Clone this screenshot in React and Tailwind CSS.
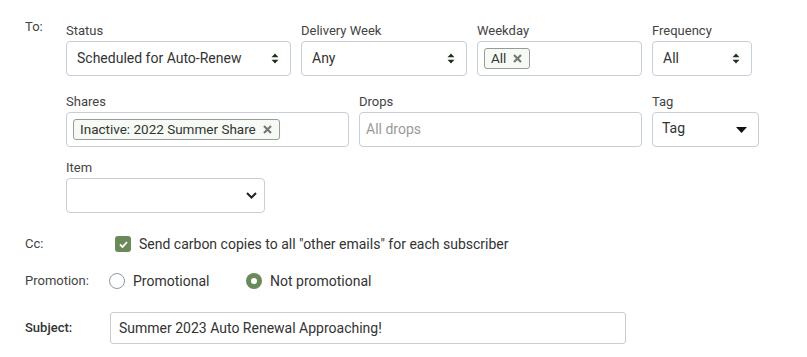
import React from 'react';

const font = { fontFamily: 'Roboto, "Noto Sans", sans-serif' };

const UpDown = () => (
    <svg width="8" height="11" viewBox="0 0 8 11" className="text-[#1f2f1f]">
        <path d="M4 0.5 L7.5 4.3 H0.5 Z" fill="currentColor" />
        <path d="M4 10.5 L7.5 6.7 H0.5 Z" fill="currentColor" />
    </svg>
);

const Caret = () => (
    <svg width="11" height="6" viewBox="0 0 11 6">
        <path d="M0 0 H11 L5.5 6 Z" fill="#111" />
    </svg>
);

const Chevron = () => (
    <svg width="11" height="7" viewBox="0 0 11 7">
        <path d="M1 1 L5.5 5.5 L10 1" fill="none" stroke="#222" strokeWidth="2" />
    </svg>
);

const X = () => (
    <svg width="9" height="9" viewBox="0 0 9 9">
        <path d="M1 1 L8 8 M8 1 L1 8" stroke="#777" strokeWidth="2.2" />
    </svg>
);

const Field = ({ label, width, children }) => (
    <div className="flex flex-col" style={{ width }}>
        <span className="text-[13px] leading-[16px] text-[#444] mb-[2px]">{label}</span>
        {children}
    </div>
);

const Box = ({ children, className = '' }) => (
    <div className={`h-[35px] border border-[#c7ced8] rounded-[4px] bg-white flex items-center ${className}`}>
        {children}
    </div>
);

const Chip = ({ text }) => (
    <span className="inline-flex items-center h-[21px] pl-[6px] pr-[7px] border border-[#9a9a9a] rounded-[3px] bg-[#f6faf4] text-[13.5px] text-[#333] gap-[7px]">
        {text}
        <X />
    </span>
);

export default function App() {
    return (
        <div className="w-[807px] h-[357px] bg-white text-[#333] pl-[25px] pt-[17px]" style={font}>
            {/* To: */}
            <div className="flex">
                <div className="w-[41px] text-[13px] text-[#444]">To:</div>
                <div className="flex flex-col pt-[6px]">
                    <div className="flex gap-[10px]">
                        <Field label="Status" width={225}>
                            <Box className="justify-between pl-[10px] pr-[11px]">
                                <span className="text-[14px]">Scheduled for Auto-Renew</span>
                                <UpDown />
                            </Box>
                        </Field>
                        <Field label="Delivery Week" width={166}>
                            <Box className="justify-between pl-[10px] pr-[11px]">
                                <span className="text-[14px]">Any</span>
                                <UpDown />
                            </Box>
                        </Field>
                        <Field label="Weekday" width={165}>
                            <Box className="pl-[6px]">
                                <Chip text="All" />
                            </Box>
                        </Field>
                        <Field label="Frequency" width={100}>
                            <Box className="justify-between pl-[10px] pr-[11px]">
                                <span className="text-[14px]">All</span>
                                <UpDown />
                            </Box>
                        </Field>
                    </div>
                    <div className="flex gap-[10px] mt-[18px]">
                        <Field label="Shares" width={283}>
                            <Box className="pl-[6px]">
                                <Chip text="Inactive: 2022 Summer Share" />
                            </Box>
                        </Field>
                        <Field label="Drops" width={283}>
                            <Box className="pl-[6px] h-[34px]">
                                <span className="text-[14px] text-[#9a9a9a]">All drops</span>
                            </Box>
                        </Field>
                        <Field label="Tag" width={107}>
                            <Box className="justify-between pl-[9px] pr-[11px]">
                                <span className="text-[14px] -mt-[2px]">Tag</span>
                                <Caret />
                            </Box>
                        </Field>
                    </div>
                    <div className="flex mt-[13px]">
                        <Field label="Item" width={199}>
                            <Box className="justify-end pr-[7px]">
                                <Chevron />
                            </Box>
                        </Field>
                    </div>
                </div>
            </div>

            {/* Cc */}
            <div className="flex items-center mt-[22px] h-[18px]">
                <div className="w-[90px] text-[13px] text-[#444]">Cc:</div>
                <span className="w-[16px] h-[16px] rounded-[3px] bg-[#6b8a5a] flex items-center justify-center">
                    <svg width="9" height="7" viewBox="0 0 9 7">
                        <path d="M1 3.5 L3.5 6 L8 1" fill="none" stroke="#fff" strokeWidth="1.8" />
                    </svg>
                </span>
                <span className="ml-[8px] text-[14px]">Send carbon copies to all "other emails" for each subscriber</span>
            </div>

            {/* Promotion */}
            <div className="flex items-center mt-[19px] h-[18px]">
                <div className="w-[84px] text-[13px] text-[#444]">Promotion:</div>
                <div className="w-[137px] flex items-center">
                    <span className="w-[16px] h-[16px] rounded-full border border-[#8e99a8] bg-white" />
                    <span className="ml-[8px] text-[14px]">Promotional</span>
                </div>
                <span className="w-[16px] h-[16px] rounded-full bg-[#6b8a5a] flex items-center justify-center">
                    <span className="w-[6px] h-[6px] rounded-full bg-white" />
                </span>
                <span className="ml-[8px] text-[14px]">Not promotional</span>
            </div>

            {/* Subject */}
            <div className="flex items-center mt-[22px]">
                <div className="w-[85px] text-[13px] text-[#333] font-medium">Subject:</div>
                <div className="w-[516px] h-[32px] border border-[#c7ced8] rounded-[3px] flex items-center pl-[8px]">
                    <span className="text-[14px] text-[#333]">Summer 2023 Auto Renewal Approaching!</span>
                </div>
            </div>
        </div>
    );
}
